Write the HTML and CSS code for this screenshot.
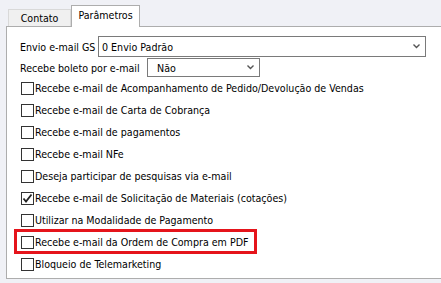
FILE: index.html
```html
<!DOCTYPE html>
<html lang="pt-br">
<head>
    <meta charset="UTF-8">
    <title>Parâmetros</title>
    <link rel="stylesheet" href="styles.css">
</head>
<body>
    <div class="tabs">
        <div class="tab">Contato</div>
        <div class="tab active">Parâmetros</div>
    </div>

    <div class="panel">
        <div class="campo campo-envio">
            <label>Envio e-mail GS</label>
            <div class="combo combo-envio">
                <span>0 Envio Padrão</span>
                <svg class="seta" width="7" height="5" viewBox="0 0 7 5"><path d="M0.5 0.5 L3.5 3.5 L6.5 0.5" fill="none" stroke="#555" stroke-width="1.4"/></svg>
            </div>
        </div>
        <div class="campo campo-boleto">
            <label>Recebe boleto por e-mail</label>
            <div class="combo combo-boleto">
                <span>Não</span>
                <svg class="seta" width="7" height="5" viewBox="0 0 7 5"><path d="M0.5 0.5 L3.5 3.5 L6.5 0.5" fill="none" stroke="#555" stroke-width="1.4"/></svg>
            </div>
        </div>

        <div class="opcao"><span class="caixa"></span>Recebe e-mail de Acompanhamento de Pedido/Devolução de Vendas</div>
        <div class="opcao"><span class="caixa"></span>Recebe e-mail de Carta de Cobrança</div>
        <div class="opcao"><span class="caixa"></span>Recebe e-mail de pagamentos</div>
        <div class="opcao"><span class="caixa"></span>Recebe e-mail NFe</div>
        <div class="opcao"><span class="caixa"></span>Deseja participar de pesquisas via e-mail</div>
        <div class="opcao"><span class="caixa"><svg width="11" height="11" viewBox="0 0 11 11"><path d="M1.5 5.5 L4 8.5 L9.5 1.5" fill="none" stroke="#222" stroke-width="1.8"/></svg></span>Recebe e-mail de Solicitação de Materiais (cotações)</div>
        <div class="opcao"><span class="caixa"></span>Utilizar na Modalidade de Pagamento</div>
        <div class="opcao destaque"><span class="caixa"></span>Recebe e-mail da Ordem de Compra em PDF</div>
        <div class="opcao"><span class="caixa"></span>Bloqueio de Telemarketing</div>
    </div>
</body>
</html>
```

FILE: styles.css
```css
body {
    margin: 0;
    background: #f0f1f6;
    font-family: "DejaVu Sans Condensed", "Liberation Sans", sans-serif;
    font-size: 10.6px;
    color: #000;
}
.tabs {
    display: flex;
    align-items: flex-end;
    height: 26px;
    padding-left: 8px;
}
.tab {
    box-sizing: border-box;
    width: 63px;
    height: 17px;
    line-height: 16px;
    text-align: center;
    background: #f0f0f0;
    border: 1px solid #d9d9d9;
    border-bottom: none;
}
.tab.active {
    width: 69px;
    height: 22px;
    margin-bottom: -1px;
    line-height: 18px;
    background: #fff;
    border-color: #adadad;
    position: relative;
    z-index: 1;
}
.panel {
    margin-left: 6px;
    height: 253px;
    background: #fff;
    border: 1px solid #adadad;
    border-right: none;
    padding: 9px 0 0 13px;
    box-sizing: border-box;
}
.campo {
    display: flex;
    align-items: center;
}
.campo label {
    white-space: nowrap;
}
.combo {
    box-sizing: border-box;
    display: flex;
    align-items: center;
    justify-content: space-between;
    border: 1px solid #7a7a7a;
    background: #fff;
    padding: 0 5px 0 3px;
}
.combo-envio {
    height: 21px;
    width: 328px;
}
.campo-envio label {
    width: 78px;
}
.campo-boleto {
    margin-top: 1px;
}
.campo-boleto label {
    width: 127px;
}
.combo-boleto {
    height: 19px;
    width: 113px;
    padding-left: 9px;
}
.seta {
    display: block;
}
.opcao {
    display: flex;
    align-items: center;
    height: 22px;
    position: relative;
    white-space: nowrap;
}
.caixa {
    box-sizing: border-box;
    width: 13px;
    height: 13px;
    margin-left: 1px;
    margin-right: 1px;
    border: 1px solid #333;
    background: #fff;
    display: flex;
    align-items: center;
    justify-content: center;
}
.caixa svg {
    display: block;
}
.destaque::after {
    content: "";
    position: absolute;
    left: -6px;
    top: -2px;
    width: 243px;
    height: 25px;
    box-sizing: border-box;
    border: 3px solid #e5141b;
}
```
